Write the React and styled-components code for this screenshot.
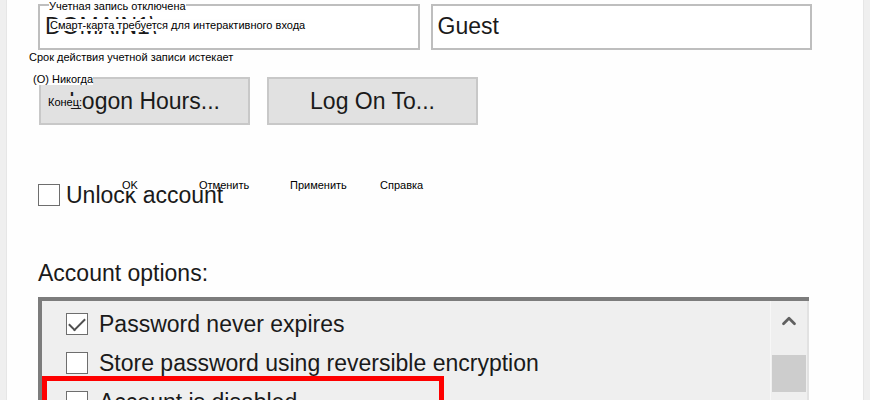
import React from 'react';
import styled, { createGlobalStyle } from 'styled-components';
import { ChevronUp } from 'lucide-react';

const options = [
  { id: 'never-expires', label: 'Password never expires', checked: true },
  { id: 'reversible', label: 'Store password using reversible encryption' },
  { id: 'disabled', label: 'Account is disabled', marked: true },
];

const App = () => {
  return (
    <>
      <GlobalStyle />
      <Page>
        <Panel>
          <Fields>
            <Field aria-label='Domain' defaultValue='DOMAIN1\' />
            <Field aria-label='User logon name' defaultValue='Guest' />
          </Fields>

          <Actions>
            <ActionButton type='button'>Logon Hours...</ActionButton>
            <ActionButton type='button'>Log On To...</ActionButton>
          </Actions>

          <UnlockRow>
            <CheckBox id='unlock' type='checkbox' />
            <Label htmlFor='unlock'>Unlock account</Label>
          </UnlockRow>

          <Heading>Account options:</Heading>
          <ListBox>
            <List>
              {options.map(({ id, label, checked, marked }) => (
                <Option key={id}>
                  <CheckBox id={id} type='checkbox' defaultChecked={checked} />
                  <Label htmlFor={id}>{label}</Label>
                  {marked && <Marker />}
                </Option>
              ))}
            </List>
            <ScrollBar>
              <ScrollButton type='button' aria-label='Scroll up'>
                <ChevronUp size={22} strokeWidth={3} />
              </ScrollButton>
              <ScrollThumb />
            </ScrollBar>
          </ListBox>
        </Panel>

        <Note $left={49} $top={0}>
          Учетная запись отключена
        </Note>
        <Note $left={50} $top={19}>
          Смарт-карта требуется для интерактивного входа
        </Note>
        <Note $left={29} $top={51}>
          Срок действия учетной записи истекает
        </Note>
        <Note $left={33} $top={73}>
          (O) Никогда
        </Note>
        <Note $left={48} $top={96} $background='#e1e1e1'>
          Конец:
        </Note>
        <NoteButton $left={122} $top={179}>
          OK
        </NoteButton>
        <NoteButton $left={199} $top={179} $background='transparent'>
          Отменить
        </NoteButton>
        <NoteButton $left={290} $top={179}>
          Применить
        </NoteButton>
        <NoteButton $left={380} $top={179}>
          Справка
        </NoteButton>
      </Page>
    </>
  );
};

const GlobalStyle = createGlobalStyle`
  * {
    box-sizing: border-box;
  }
  body {
    margin: 0;
    font-family: 'Liberation Sans', Arial, sans-serif;
    font-size: 23px;
    line-height: 28px;
    color: #1a1a1a;
  }
  button,
  input {
    font: inherit;
    color: inherit;
  }
`;

const Page = styled.main`
  position: relative;
  height: 100vh;
  overflow: hidden;
  padding: 0 7px;
  background: #efefef;
`;
const Panel = styled.section`
  min-height: 100%;
  padding: 4px 51px 0 31px;
  background: #fefefe;
  box-shadow: 0 0 0 1px #e6e6e6;
`;
const Fields = styled.div`
  display: flex;
  gap: 11px;
`;
const Field = styled.input`
  flex: 1;
  min-width: 0;
  height: 46px;
  padding: 0 5px 2px;
  border: 2px solid #bebebe;
  border-radius: 0;
  background: #fff;
  outline: none;
`;
const Actions = styled.div`
  display: flex;
  gap: 17px;
  margin: 27px 0 0 1px;
`;
const ActionButton = styled.button`
  width: 211px;
  height: 48px;
  padding: 0;
  border: 2px solid #c8c8c8;
  background: #e1e1e1;
`;
const UnlockRow = styled.div`
  display: flex;
  align-items: center;
  gap: 6px;
  margin-top: 56px;
`;
const CheckBox = styled.input`
  appearance: none;
  flex: none;
  width: 22px;
  height: 22px;
  margin: 0;
  border: 1px solid #6e6e6e;
  background: #fff;
  &:checked {
    display: grid;
    place-items: center;
  }
  &:checked::before {
    content: '';
    width: 14px;
    height: 7px;
    margin-top: -4px;
    border: solid #505050;
    border-width: 0 0 2px 2px;
    rotate: -45deg;
  }
`;
const Label = styled.label`
  white-space: nowrap;
`;
const Heading = styled.h2`
  margin: 50px 0 10px;
  font-size: inherit;
  font-weight: 400;
`;
const ListBox = styled.div`
  display: flex;
  margin-right: 3px;
  border: solid #7c7c7c;
  border-width: 4px 0 0 4px;
  box-shadow: inset -2px 0 #e2e2e2;
  background: #efefef;
`;
const List = styled.ul`
  flex: 1;
  margin: 0;
  padding: 1px 0 0;
  list-style: none;
`;
const Option = styled.li`
  position: relative;
  display: flex;
  align-items: center;
  gap: 11px;
  height: 39px;
  padding: 5px 0 0 24px;
`;
const Marker = styled.div`
  position: absolute;
  top: -4px;
  left: 0;
  width: 402px;
  height: 60px;
  border: 5px solid #fe0000;
  pointer-events: none;
`;
const ScrollBar = styled.div`
  display: flex;
  flex-direction: column;
  width: 39px;
  padding: 0 3px 0 1px;
  border-left: 1px solid #f7f7f7;
`;
const ScrollButton = styled.button`
  display: grid;
  place-items: center;
  height: 54px;
  padding: 0 0 15px;
  border: 0;
  background: none;
  color: #606060;
`;
const ScrollThumb = styled.div`
  height: 37px;
  background: #cdcdcd;
`;
const Note = styled.span`
  position: absolute;
  top: ${({ $top }) => $top}px;
  left: ${({ $left }) => $left}px;
  padding: 0;
  border: 0;
  background: ${({ $background }) => $background || '#fefefe'};
  font-size: 11px;
  line-height: 12px;
  color: #000;
  white-space: nowrap;
`;
const NoteButton = styled(Note).attrs({ as: 'button', type: 'button' })``;

export default App;
